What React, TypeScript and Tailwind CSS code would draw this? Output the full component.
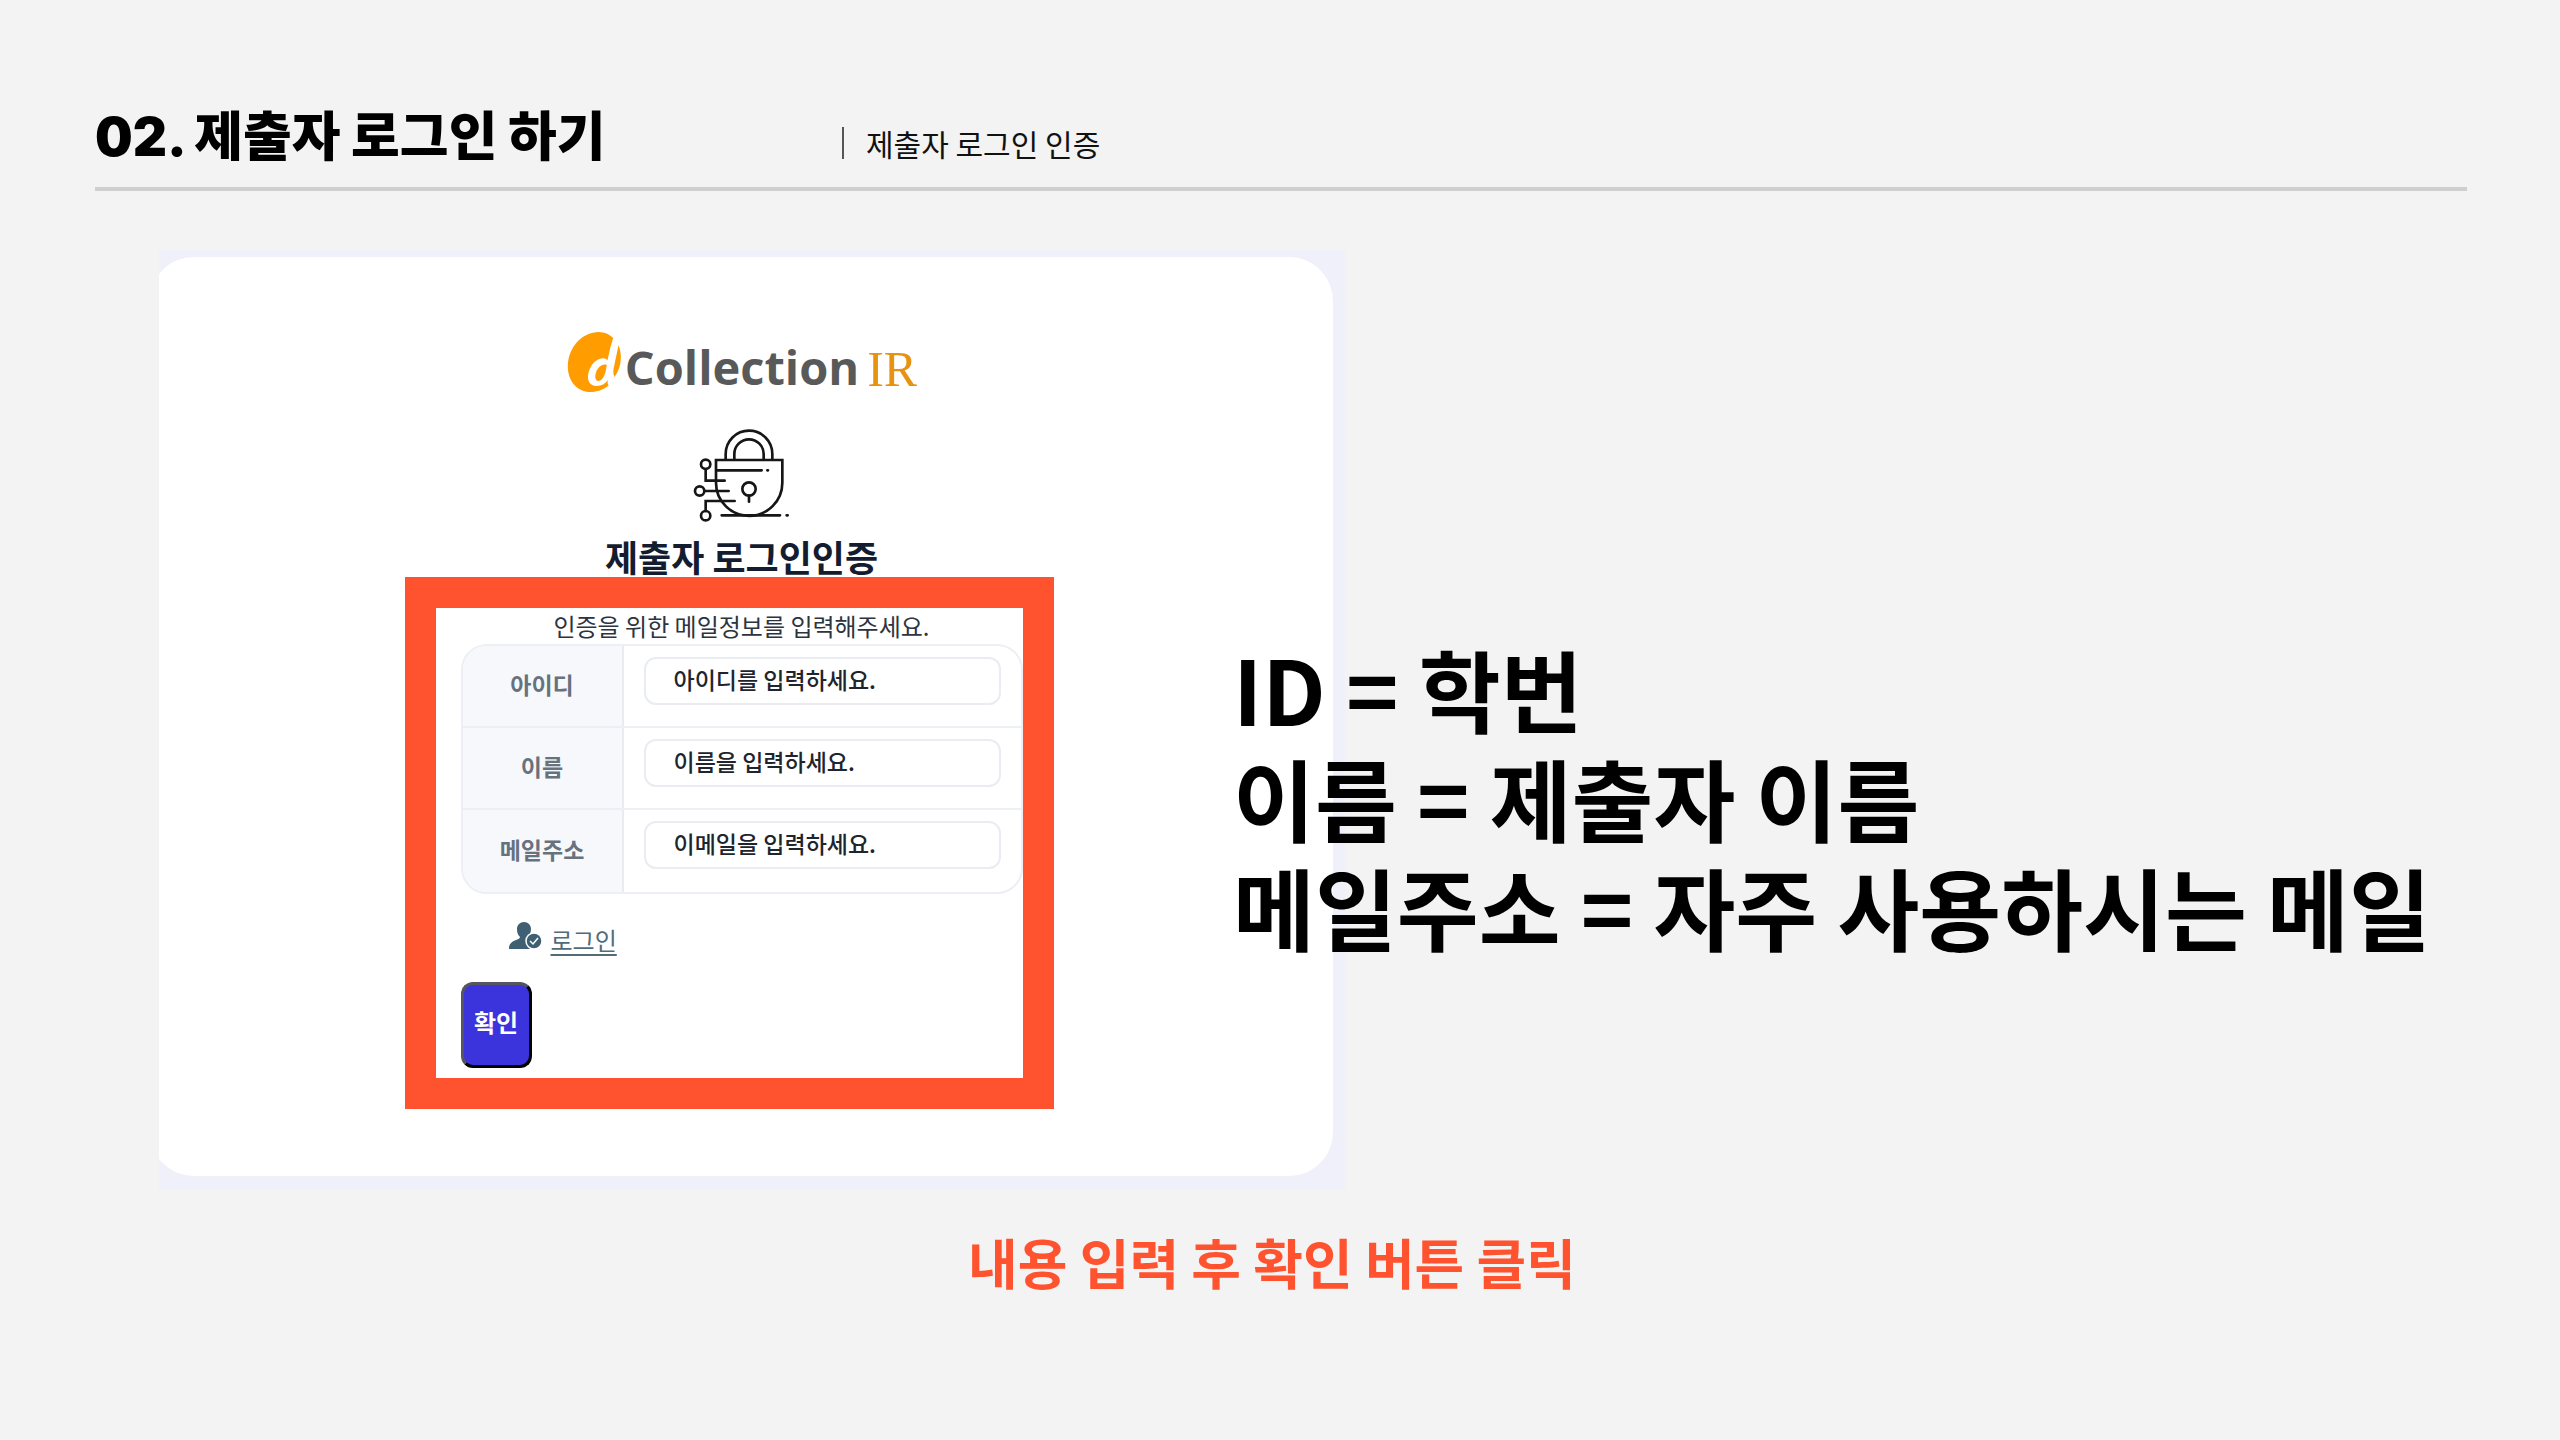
const fields = [
  { id: 'user-id', label: '아이디', placeholder: '아이디를 입력하세요.', type: 'text' },
  { id: 'user-name', label: '이름', placeholder: '이름을 입력하세요.', type: 'text' },
  { id: 'user-mail', label: '메일주소', placeholder: '이메일을 입력하세요.', type: 'email' },
];

const notes = ['ID = 학번', '이름 = 제출자 이름', '메일주소 = 자주 사용하시는 메일'];

function Logo() {
  return (
    <div className="flex h-16 items-end">
      <svg viewBox="80 58 170 192" className="h-16 w-[57px]" aria-hidden="true">
        <path
          fill="#ff9c00"
          d="M221 82C206 66 184 60 160 66C116 76 86 118 85 166C84 212 116 248 160 244C180 242 197 234 208 224C203 220 204 214 206 208C196 220 184 227 170 226C152 225 143 211 146 192C150 166 168 144 190 143C197 143 201 145 204 149L212 113Z"
        />
        <path fill="#ff9c00" d="M202 163C190 158 176 168 170 184C165 198 167 210 176 211C187 211 194 198 198 184Z" />
        <path fill="#ff9c00" d="M237 104C248 130 248 168 225 199C220 190 221 178 224 166Z" />
      </svg>
      <span className="ml-0.5 font-['Open_Sans'] text-[47px] leading-[54px] font-bold text-[#595959]">Collection</span>
      <span className="ml-2 font-['Liberation_Serif'] text-[50px] leading-[50px] text-[#e8930f]">IR</span>
    </div>
  );
}

function PadlockIcon() {
  return (
    <svg
      viewBox="458 350 294 282"
      className="h-[94px] w-[98px]"
      fill="none"
      stroke="#161616"
      strokeWidth="8"
      strokeLinecap="round"
      aria-hidden="true"
    >
      <path d="M556 445V428A70 70 0 0 1 696 428V445M582 445V428A44 44 0 0 1 670 428V445" />
      <path d="M527 446H726V514A99.500 99.500 0 0 1 527 514Z" />
      <path d="M530 477H664M681 477H683M544 612H719M739 612H742" />
      <circle cx="626" cy="533" r="20" />
      <path d="M626 553V571" />
      <circle cx="496" cy="459" r="14" />
      <circle cx="478" cy="539" r="14" />
      <circle cx="496" cy="613" r="14" />
      <path d="M496 473V508H553M492 539H565M496 599V569H583" />
    </svg>
  );
}

function UserCheckIcon() {
  return (
    <svg viewBox="0 0 34 28" className="h-7 w-[34px]" aria-hidden="true">
      <path
        fill="#3f6072"
        d="M15 0C19 0 22 3 22 7C22 11 20 13 19 15C19 18 21 19 24 20V27H0C0 22 2 20 7 18C10 17 11 16 11 15C9 13 8 11 8 7C8 3 11 0 15 0Z"
      />
      <circle cx="25" cy="19" r="8" fill="#3f6072" stroke="#fff" strokeWidth="1.500" />
      <path d="M21 19L24 22L29 16" fill="none" stroke="#fff" strokeWidth="1.500" />
    </svg>
  );
}

function LoginForm() {
  return (
    <form className="relative mt-[26px] w-[562px]" onSubmit={(e) => e.preventDefault()}>
      <p className="text-center text-[24px] leading-9 text-[#2c3440]">인증을 위한 메일정보를 입력해주세요.</p>
      <div className="overflow-hidden rounded-[26px] border-2 border-[#eceff3]">
        {fields.map((f) => (
          <div key={f.id} className="flex h-[82px] border-b-2 border-[#eceff3] last:border-b-0">
            <label
              htmlFor={f.id}
              className="flex w-[161px] items-center justify-center border-r-2 border-[#e8ebf0] bg-[#f6f8fb] pb-1 text-[23px] font-bold text-[#66727e]"
            >
              {f.label}
            </label>
            <div className="flex-1 px-5 pt-[11px]">
              <input
                id={f.id}
                type={f.type}
                placeholder={f.placeholder}
                className="h-12 w-full rounded-xl border-2 border-[#e9ecf0] bg-white px-7 pb-1 text-[23px] font-medium text-[#20242c] placeholder:text-[#20242c]"
              />
            </div>
          </div>
        ))}
      </div>
      <div className="mt-7 flex h-9 items-start gap-2 pl-12">
        <UserCheckIcon />
        <a href="#login" className="text-[24px] leading-9 text-[#526b79] underline underline-offset-4">
          로그인
        </a>
      </div>
      <button
        type="submit"
        className="mt-6 h-[86px] w-[71px] rounded-xl border-[3px] border-t-[#55555f] border-r-black border-b-black border-l-[#55555f] bg-[#3b33dc] pb-1.5 text-[24px] font-bold text-white"
      >
        확인
      </button>
      <div className="pointer-events-none absolute -top-[31px] -right-[31px] -bottom-[41px] -left-14 border-[31px] border-[#ff5330]" />
    </form>
  );
}

export default function App() {
  return (
    <main className="min-h-screen bg-[#f3f3f3] pt-24 pr-[93px] pb-24 pl-[95px] font-['Noto_Sans_CJK_KR',sans-serif] text-black">
      <header className="flex h-[95px] items-center border-b-4 border-[#cfcfcf] pb-2">
        <h1 className="w-[747px] font-['Inter','Noto_Sans_CJK_KR',sans-serif] text-[53px] font-black">
          02. 제출자 로그인 하기
        </h1>
        <p className="flex items-center gap-[22px] pt-2.5 text-[30px] leading-8 text-[#111]">
          <span className="h-8 w-[2px] bg-[#555]" />
          제출자 로그인 인증
        </p>
      </header>

      <section className="mt-[59px] flex items-center pl-16">
        <div className="w-[1186px] shrink-0 overflow-hidden bg-[#f0f0fa] pt-[7px] pr-3 pb-[14px]">
          <div className="-ml-[9px] flex flex-col items-center rounded-[44px] bg-white pt-[73px] pb-[108px]">
            <Logo />
            <div className="mt-[34px]">
              <PadlockIcon />
            </div>
            <h2 className="mt-2 text-[36px] leading-[52px] font-bold text-[#141c30]">제출자 로그인인증</h2>
            <LoginForm />
          </div>
        </div>
        <ul className="relative -ml-[112px] pt-[152px] text-[89px] leading-[109px] font-bold whitespace-nowrap">
          {notes.map((note) => (
            <li key={note}>{note}</li>
          ))}
        </ul>
      </section>

      <p className="mt-9 pr-[18px] text-center text-[54px] leading-[72px] font-bold text-[#ff5330]">
        내용 입력 후 확인 버튼 클릭
      </p>
    </main>
  );
}
